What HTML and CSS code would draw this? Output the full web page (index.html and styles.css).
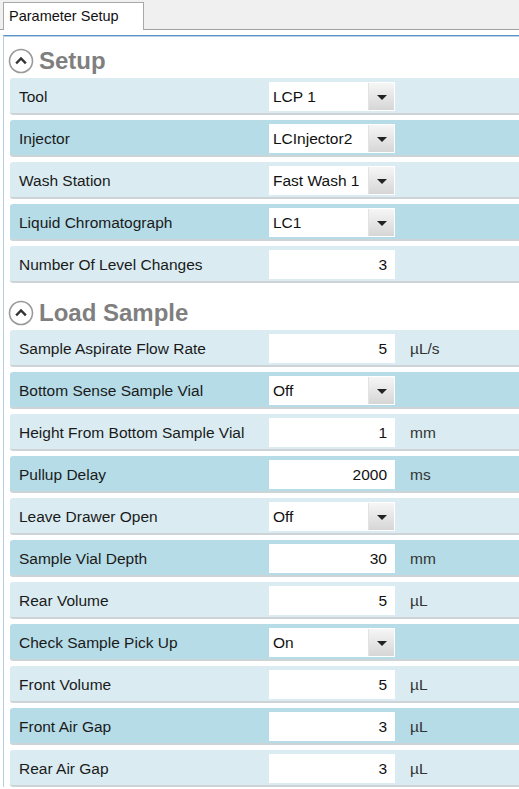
FILE: index.html
```html
<!DOCTYPE html>
<html>
<head>
<meta charset="utf-8">
<link rel="stylesheet" href="styles.css">
</head>
<body>
<div class="tabstrip"><div class="tab">Parameter Setup</div></div>
<div class="panel">
  <div class="section-head">
    <svg class="toggle" width="26" height="26" viewBox="0 0 26 26"><circle cx="13" cy="13" r="11.5" fill="#fff" stroke="#9a9a9a" stroke-width="1.6"/><path d="M9 14.5 L13 10.5 L17 14.5" fill="none" stroke="#333" stroke-width="2.4" stroke-linecap="square"/></svg>
    <span class="section-title">Setup</span>
  </div>
  <div class="row light"><span class="label">Tool</span><div class="field select"><span>LCP 1</span><i class="btn"></i></div></div>
  <div class="row dark"><span class="label">Injector</span><div class="field select"><span>LCInjector2</span><i class="btn"></i></div></div>
  <div class="row light"><span class="label">Wash Station</span><div class="field select"><span>Fast Wash 1</span><i class="btn"></i></div></div>
  <div class="row dark"><span class="label">Liquid Chromatograph</span><div class="field select"><span>LC1</span><i class="btn"></i></div></div>
  <div class="row light"><span class="label">Number Of Level Changes</span><div class="field num">3</div></div>

  <div class="section-head">
    <svg class="toggle" width="26" height="26" viewBox="0 0 26 26"><circle cx="13" cy="13" r="11.5" fill="#fff" stroke="#9a9a9a" stroke-width="1.6"/><path d="M9 14.5 L13 10.5 L17 14.5" fill="none" stroke="#333" stroke-width="2.4" stroke-linecap="square"/></svg>
    <span class="section-title">Load Sample</span>
  </div>
  <div class="row light"><span class="label">Sample Aspirate Flow Rate</span><div class="field num">5</div><span class="unit">µL/s</span></div>
  <div class="row dark"><span class="label">Bottom Sense Sample Vial</span><div class="field select"><span>Off</span><i class="btn"></i></div></div>
  <div class="row light"><span class="label">Height From Bottom Sample Vial</span><div class="field num">1</div><span class="unit">mm</span></div>
  <div class="row dark"><span class="label">Pullup Delay</span><div class="field num">2000</div><span class="unit">ms</span></div>
  <div class="row light"><span class="label">Leave Drawer Open</span><div class="field select"><span>Off</span><i class="btn"></i></div></div>
  <div class="row dark"><span class="label">Sample Vial Depth</span><div class="field num">30</div><span class="unit">mm</span></div>
  <div class="row light"><span class="label">Rear Volume</span><div class="field num">5</div><span class="unit">µL</span></div>
  <div class="row dark"><span class="label">Check Sample Pick Up</span><div class="field select"><span>On</span><i class="btn"></i></div></div>
  <div class="row light"><span class="label">Front Volume</span><div class="field num">5</div><span class="unit">µL</span></div>
  <div class="row dark"><span class="label">Front Air Gap</span><div class="field num">3</div><span class="unit">µL</span></div>
  <div class="row light"><span class="label">Rear Air Gap</span><div class="field num">3</div><span class="unit">µL</span></div>
</div>
</body>
</html>
```
FILE: styles.css
```css
html, body {
  margin: 0;
  padding: 0;
  background: #fff;
  font-family: "Liberation Sans", Arial, sans-serif;
  color: #1e1e1e;
  overflow: hidden;
}
.tabstrip {
  height: 29px;
  background: #f0f0f0;
  border-bottom: 1px solid #a0a0a0;
  display: flex;
  align-items: flex-end;
  padding-left: 3px;
}
.tab {
  box-sizing: border-box;
  width: 141px;
  margin-bottom: -1px;
  height: 28px;
  background: #fff;
  border: 1px solid #a8a8a8;
  border-bottom: none;
  font-size: 14.5px;
  line-height: 27px;
  padding-left: 5px;
  color: #111;
}
.panel {
  margin-top: 5px;
  margin-left: 3px;
  border-top: 1px solid #5b92c6;
  border-left: 1px solid #b7d0e2;
  box-shadow: inset 0 1px 0 #b9d3ea;
  padding-left: 6px;
}
.section-head {
  height: 42px;
  display: flex;
  align-items: center;
  padding-top: 8px;
  box-sizing: border-box;
}
.toggle {
  margin-left: -2px;
  margin-right: 5px;
  flex: none;
}
.section-title {
  font-size: 24px;
  font-weight: bold;
  color: #7f7f7f;
}
.row {
  height: 33px;
  border-bottom: 2px solid #cdd4d7;
  margin-bottom: 5px;
  border-radius: 3px 0 0 3px;
  display: grid;
  grid-template-columns: 250px 126px auto;
  align-items: center;
  padding-left: 9px;
  padding-top: 2px;
  box-sizing: content-box;
  font-size: 15.5px;
}
.row.light { background: #daecf2; }
.row.dark { background: #b6dce7; }
.label { color: #1a1a1a; white-space: nowrap; }
.field {
  height: 29px;
  background: #fff;
  box-sizing: border-box;
  display: flex;
  align-items: center;
  color: #111;
}
.num {
  justify-content: flex-end;
  padding-right: 8px;
}
.select {
  justify-content: space-between;
  padding-left: 4px;
}
.btn {
  width: 26px;
  height: 27px;
  margin-right: 1px;
  background: linear-gradient(#f6f6f6, #d6d6d6);
  border-left: 1px solid #e2e2e2;
  position: relative;
  box-sizing: border-box;
}
.btn::after {
  content: "";
  position: absolute;
  left: 8px;
  top: 12px;
  border-left: 5px solid transparent;
  border-right: 5px solid transparent;
  border-top: 5px solid #222;
}
.unit {
  color: #333;
  padding-left: 15px;
}
```
